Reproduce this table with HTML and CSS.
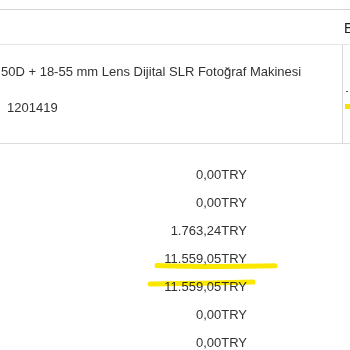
FILE: index.html
```html
<!DOCTYPE html>
<html lang="tr">
<head>
<meta charset="utf-8">
<title>Sipariş</title>
<link rel="stylesheet" href="styles.css">
</head>
<body>
<div class="page">
  <div class="table">
    <div class="head">
      <div class="hcell hcell-main"></div>
      <div class="hcell hcell-side">E</div>
    </div>
    <div class="row">
      <div class="cell cell-main">
        <div class="name">50D + 18-55 mm Lens Dijital SLR Fotoğraf Makinesi</div>
        <div class="code">1201419</div>
      </div>
      <div class="cell cell-side">
        <span class="dash"></span>
        <span class="mark"></span>
      </div>
    </div>
  </div>
  <div class="amounts">
    <div class="amount">0,00TRY</div>
    <div class="amount">0,00TRY</div>
    <div class="amount">1.763,24TRY</div>
    <div class="amount">11.559,05TRY</div>
    <div class="amount">11.559,05TRY</div>
    <div class="amount">0,00TRY</div>
    <div class="amount">0,00TRY</div>
  </div>
  <svg class="highlights" width="350" height="350" viewBox="0 0 350 350">
    <path d="M157 265.5 Q210 267.5 275 265.8" />
    <path d="M150 284 Q200 283.5 253 282" />
  </svg>
</div>
</body>
</html>
```
FILE: styles.css
```css
html, body {
  margin: 0;
  padding: 0;
  background: #fff;
}
body {
  font-family: "Liberation Sans", Arial, sans-serif;
  font-size: 13px;
  color: #333;
  overflow: hidden;
}
.page {
  position: relative;
  width: 350px;
  height: 350px;
  overflow: hidden;
}
.table {
  padding-top: 9px;
}
.head {
  display: grid;
  grid-template-columns: 344px 1fr;
  border-top: 1px solid #d6d6d6;
  border-bottom: 1px solid #e6e6e6;
  height: 34px;
}
.hcell-side {
  font-size: 14px;
  line-height: 32px;
  padding-top: 2px;
  color: #222;
  white-space: nowrap;
  overflow: hidden;
}
.row {
  display: grid;
  grid-template-columns: 343px 1fr;
  border-bottom: 1px solid #dcdcdc;
  height: 98px;
}
.cell-main {
  border-right: 1px solid #d6d6d6;
  padding-top: 17px;
}
.name {
  line-height: 20px;
  padding-left: 1px;
  white-space: nowrap;
}
.code {
  line-height: 20px;
  margin-top: 16px;
  padding-left: 7px;
}
.cell-side {
  display: flex;
  flex-direction: column;
  padding-top: 46px;
  padding-left: 2px;
}
.dash {
  width: 2px;
  height: 1px;
  background: #555;
  margin-left: 1px;
}
.mark {
  width: 6px;
  height: 5px;
  background: #f4e300;
  margin-top: 12px;
}
.amounts {
  width: 247px;
  text-align: right;
  padding-top: 17px;
}
.amount {
  line-height: 28px;
  white-space: nowrap;
}
.highlights {
  position: absolute;
  left: 0;
  top: 0;
  mix-blend-mode: multiply;
  pointer-events: none;
}
.highlights path {
  fill: none;
  stroke: #fbe800;
  stroke-width: 5;
  stroke-linecap: round;
}
```
